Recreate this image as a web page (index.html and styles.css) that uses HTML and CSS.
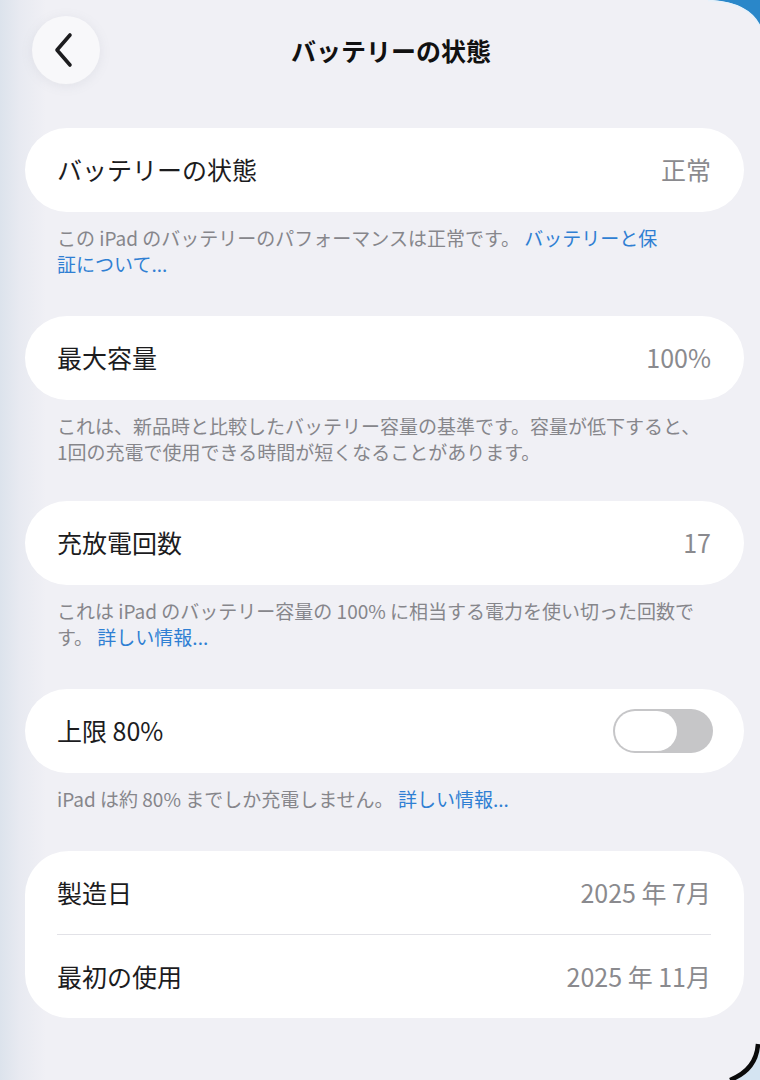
FILE: index.html
```html
<!DOCTYPE html>
<html lang="ja">
<head>
<meta charset="utf-8">
<title>バッテリーの状態</title>
<link rel="stylesheet" href="styles.css">
</head>
<body>
<div class="screen">
  <header class="header">
    <button class="back" aria-label="戻る">
      <svg width="22" height="36" viewBox="0 0 22 36"><path d="M17 3 L4 18 L17 33" fill="none" stroke="#1c1c1e" stroke-width="3.6" stroke-linecap="round" stroke-linejoin="round"/></svg>
    </button>
    <h1 class="title">バッテリーの状態</h1>
  </header>

  <section class="group">
    <div class="card"><span class="label">バッテリーの状態</span><span class="value">正常</span></div>
    <p class="note">この iPad のバッテリーのパフォーマンスは正常です。 <a class="link">バッテリーと保<br>証について...</a></p>
  </section>

  <section class="group group-tight">
    <div class="card"><span class="label">最大容量</span><span class="value">100%</span></div>
    <p class="note">これは、新品時と比較したバッテリー容量の基準です。容量が低下すると、<br>1回の充電で使用できる時間が短くなることがあります。</p>
  </section>

  <section class="group">
    <div class="card"><span class="label">充放電回数</span><span class="value">17</span></div>
    <p class="note">これは iPad のバッテリー容量の 100% に相当する電力を使い切った回数で<br>す。 <a class="link">詳しい情報...</a></p>
  </section>

  <section class="group">
    <div class="card"><span class="label">上限 80%</span><span class="toggle"><span class="knob"></span></span></div>
    <p class="note">iPad は約 80% までしか充電しません。 <a class="link">詳しい情報...</a></p>
  </section>

  <section class="group">
    <div class="card card-multi">
      <div class="row"><span class="label">製造日</span><span class="value">2025 年 7月</span></div>
      <div class="divider"></div>
      <div class="row"><span class="label">最初の使用</span><span class="value">2025 年 11月</span></div>
    </div>
  </section>
</div>

<svg class="corner-top" width="62" height="28" viewBox="0 0 62 28">
  <path d="M0 0 H62 V26 C54 10 38 1 10 0 Z" fill="#2a87c9"/>
  <path d="M10 0.5 C38 1.5 54 10 62 26" fill="none" stroke="#e6f1fa" stroke-width="1.5"/>
</svg>
<svg class="corner-bottom" width="32" height="40" viewBox="0 0 32 40">
  <path d="M32 6 C30 22 22 34 4 40 H32 Z" fill="#d4e4f2"/>
  <path d="M30 4 C29 20 20 33 2 40" fill="none" stroke="#0a0a0a" stroke-width="4.5"/>
</svg>
</body>
</html>
```

FILE: styles.css
```css
* { box-sizing: border-box; }

html, body {
  margin: 0;
  padding: 0;
}

body {
  width: 760px;
  height: 1080px;
  overflow: hidden;
  position: relative;
  background: linear-gradient(to right, #dce3ec 0px, #e8eaf1 20px, #f0f0f5 46px, #f0f0f5 100%);
  font-family: "Noto Sans CJK JP", "Noto Sans", sans-serif;
  color: #1c1c1e;
}

.screen {
  padding: 16px 16px 0 25px;
}

.header {
  display: flex;
  align-items: center;
  height: 68px;
  padding-left: 7px;
  margin-bottom: 44px;
}

.back {
  width: 68px;
  height: 68px;
  border-radius: 50%;
  border: none;
  background: #f8f8fa;
  box-shadow: 0 2px 12px rgba(120, 130, 150, 0.12);
  display: flex;
  align-items: center;
  justify-content: center;
  padding: 0 4px 0 0;
  flex: none;
}

.title {
  flex: 1;
  margin: 0 62px 0 0;
  text-align: center;
  font-size: 25px;
  line-height: 30px;
  font-weight: 700;
  color: #111;
}

.group {
  margin-bottom: 39px;
}

.group-tight {
  margin-bottom: 36px;
}

.card {
  height: 84px;
  border-radius: 42px;
  background: #ffffff;
  display: flex;
  align-items: center;
  justify-content: space-between;
  padding: 0 33px 2px 32px;
  font-size: 25px;
  line-height: 30px;
}

.card-multi {
  height: 167px;
  display: flex;
  flex-direction: column;
  align-items: stretch;
  justify-content: flex-start;
  border-radius: 44px;
  padding-bottom: 0;
}

.row {
  height: 83px;
  display: flex;
  align-items: center;
  justify-content: space-between;
  padding-bottom: 2px;
}

.divider {
  height: 1px;
  background: #e2e2e7;
}

.label {
  color: #1c1c1e;
}

.value {
  color: #8a8a8e;
}

.note {
  margin: 13px 0 0 0;
  padding: 0 32px;
  font-size: 19px;
  line-height: 26px;
  color: #86868b;
}

.link {
  color: #2f7fd3;
}

.toggle {
  width: 100px;
  height: 44px;
  border-radius: 22px;
  background: #c6c6c8;
  padding: 2px;
  display: flex;
  margin-right: -2px;
  margin-bottom: -2px;
}

.knob {
  width: 62px;
  height: 40px;
  border-radius: 20px;
  background: #ffffff;
}

.corner-top {
  position: absolute;
  top: 0;
  right: 0;
}

.corner-bottom {
  position: absolute;
  bottom: 0;
  right: 0;
}
```
